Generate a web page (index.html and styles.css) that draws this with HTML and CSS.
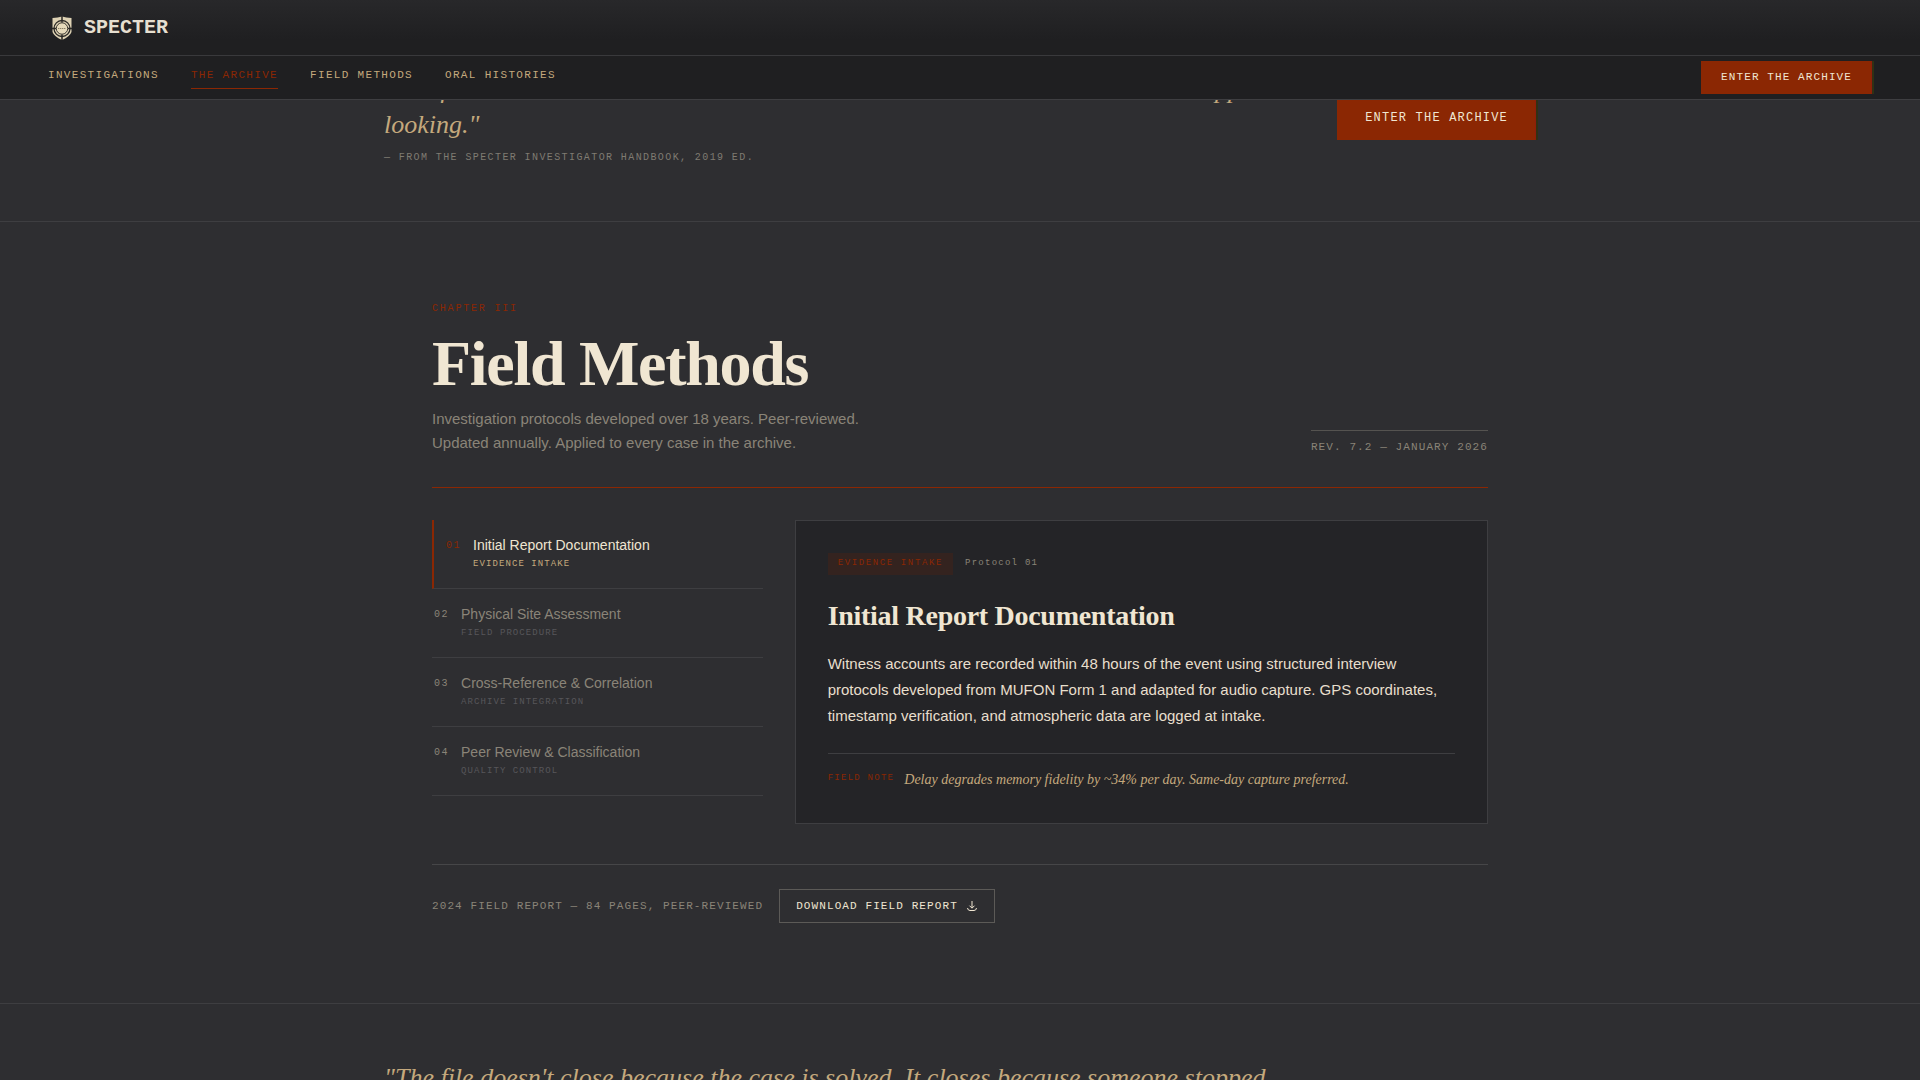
FILE: index.html
```html
<!DOCTYPE html>
<html lang="en">
  <head>
    <meta charset="UTF-8" />
    <meta name="viewport" content="width=device-width, initial-scale=1.0" />
    <title>Specter</title>
    <link rel="stylesheet" href="styles.css">
  </head>
  <body>
    <header class="site-header">
      <div class="brand-bar">
        <a href="#" class="brand">
          <svg class="brand-logo" viewBox="0 0 28 28" aria-hidden="true">
            <path d="M4.500 4 Q10 3.800 14 2.500 Q18 3.800 23.500 4 V18 Q22 22.500 14 26 Q6 22.500 4.500 18 Z" fill="#ded2b4" />
            <circle cx="14" cy="14.500" r="8" fill="none" stroke="#2b2926" stroke-width="1.300" />
            <circle cx="14" cy="14.500" r="5.700" fill="#e6dabb" stroke="#2b2926" stroke-width="0.900" />
            <path d="M14 2 V8.500 M14 20.500 V26 M4 14.500 H8 M20 14.500 H24" stroke="#2b2926" stroke-width="1.500" />
            <path d="M10 14.500 H18" fill="none" stroke="#8d8369" stroke-width="1.200" stroke-dasharray="1.400 0.600" />
          </svg>
          <span>SPECTER</span>
        </a>
      </div>
      <div class="nav-bar">
        <nav class="nav-links">
          <a href="#">INVESTIGATIONS</a>
          <a href="#" class="active">THE ARCHIVE</a>
          <a href="#methods">FIELD METHODS</a>
          <a href="#">ORAL HISTORIES</a>
        </nav>
        <a href="#" class="cta cta-small">ENTER THE ARCHIVE</a>
      </div>
    </header>

    <main>
      <section class="quote-section quote-first">
        <div class="quote-inner">
          <blockquote>
            <p>"The file doesn't close because the case is solved. It closes because someone stopped looking."</p>
            <cite>— FROM THE SPECTER INVESTIGATOR HANDBOOK, 2019 ED.</cite>
          </blockquote>
          <a href="#" class="cta cta-large">ENTER THE ARCHIVE</a>
        </div>
      </section>

      <section class="methods" id="methods">
        <div class="methods-head">
          <div>
            <p class="chapter">CHAPTER III</p>
            <h1>Field Methods</h1>
            <p class="intro">Investigation protocols developed over 18 years. Peer-reviewed.<br>Updated annually. Applied to every case in the archive.</p>
          </div>
          <p class="revision">REV. 7.2 — JANUARY 2026</p>
        </div>

        <div class="methods-grid">
          <div class="protocol-list">
            <button type="button" class="protocol active">
              <span class="num">01</span>
              <span class="label">Initial Report Documentation<small>EVIDENCE INTAKE</small></span>
            </button>
            <button type="button" class="protocol">
              <span class="num">02</span>
              <span class="label">Physical Site Assessment<small>FIELD PROCEDURE</small></span>
            </button>
            <button type="button" class="protocol">
              <span class="num">03</span>
              <span class="label">Cross-Reference &amp; Correlation<small>ARCHIVE INTEGRATION</small></span>
            </button>
            <button type="button" class="protocol">
              <span class="num">04</span>
              <span class="label">Peer Review &amp; Classification<small>QUALITY CONTROL</small></span>
            </button>
          </div>

          <article class="detail">
            <div class="detail-meta">
              <span class="tag">EVIDENCE INTAKE</span>
              <span class="protocol-id">Protocol 01</span>
            </div>
            <h2>Initial Report Documentation</h2>
            <p class="detail-text">Witness accounts are recorded within 48 hours of the event using structured interview protocols developed from MUFON Form 1 and adapted for audio capture. GPS coordinates, timestamp verification, and atmospheric data are logged at intake.</p>
            <div class="note">
              <span class="note-label">FIELD NOTE</span>
              <em>Delay degrades memory fidelity by ~34% per day. Same-day capture preferred.</em>
            </div>
          </article>
        </div>

        <div class="report">
          <span>2024 FIELD REPORT — 84 PAGES, PEER-REVIEWED</span>
          <button type="button" class="download">
            DOWNLOAD FIELD REPORT
            <svg viewBox="0 0 12 12" aria-hidden="true">
              <path d="M6 1 V8 M3.500 5.700 L6 8.200 L8.500 5.700 M1.500 8 Q1.800 10.500 4 10.500 H8 Q10.200 10.500 10.500 8" />
            </svg>
          </button>
        </div>
      </section>

      <section class="quote-section">
        <div class="quote-inner">
          <blockquote>
            <p>"The file doesn't close because the case is solved. It closes because someone stopped looking."</p>
            <cite>— FROM THE SPECTER INVESTIGATOR HANDBOOK, 2019 ED.</cite>
          </blockquote>
          <a href="#" class="cta cta-large">ENTER THE ARCHIVE</a>
        </div>
      </section>
    </main>
  </body>
</html>
```
FILE: styles.css
```css
:root {
  --bg: #2e2e31;
  --panel: #242427;
  --line: #3e3e41;
  --cream: #f0e6d2;
  --tan: #c4a97d;
  --muted: #8a8478;
  --dim: #57565a;
  --rust: #8b2703;
  --mono: "Liberation Mono", "Courier New", monospace;
  --serif: "Liberation Serif", "Times New Roman", serif;
  --sans: "Liberation Sans", Arial, sans-serif;
}
* {
  box-sizing: border-box;
}
body {
  margin: 0;
  background: var(--bg);
  color: var(--cream);
  font-family: var(--sans);
}
h1,
h2,
p,
blockquote {
  margin: 0;
}
a {
  text-decoration: none;
}
button {
  background: none;
  border: none;
  border-radius: 0;
  cursor: pointer;
}

/* Header */
.site-header {
  position: fixed;
  top: 0;
  left: 0;
  right: 0;
  z-index: 10;
  background: linear-gradient(#28282a, #1f1f21 40px);
  border-bottom: 1px solid var(--line);
}
.brand-bar {
  display: flex;
  align-items: center;
  height: 56px;
  padding: 0 48px;
  border-bottom: 1px solid #39393c;
}
.brand {
  display: flex;
  align-items: center;
  gap: 8px;
  color: #e6dfd0;
  font: bold 20px/24px var(--mono);
}
.brand-logo {
  width: 28px;
  height: 28px;
}
.nav-bar {
  display: flex;
  align-items: center;
  justify-content: space-between;
  height: 43px;
  padding: 0 48px;
}
.nav-links {
  display: flex;
  gap: 32px;
  margin-bottom: 4px;
}
.nav-links a {
  padding: 4px 0 5px;
  border-bottom: 1px solid transparent;
  color: var(--tan);
  font: 11px/16px var(--mono);
  letter-spacing: 0.12em;
}
.nav-links a.active {
  color: var(--rust);
  border-color: var(--rust);
}
.cta {
  background: var(--rust);
  box-shadow: 2px 0 0 #303114, inset -1px 0 0 #8f1d0a;
  color: var(--cream);
  font-family: var(--mono);
  letter-spacing: 0.1em;
  white-space: nowrap;
}
.cta-small {
  padding: 8px 20px;
  font-size: 11px;
  line-height: 17px;
}
.cta-large {
  padding: 14px 28px;
  font-size: 12px;
  line-height: 15px;
}

/* Quote */
.quote-section {
  padding: 56px 48px;
  border-bottom: 1px solid var(--line);
}
.quote-first {
  padding-top: 72px;
}
.quote-inner {
  display: flex;
  align-items: center;
  justify-content: space-between;
  gap: 48px;
  max-width: 1152px;
  margin: 0 auto;
}
.quote-inner p {
  color: var(--tan);
  font: italic 26px/35px var(--serif);
}
.quote-inner cite {
  display: block;
  margin-top: 8px;
  color: #7f7b72;
  font: normal 10px/15px var(--mono);
  letter-spacing: 0.14em;
}

/* Field methods */
.methods {
  border-bottom: 1px solid var(--line);
  padding: 80px max(48px, calc(50% - 528px));
}
.methods-head {
  display: flex;
  align-items: flex-end;
  justify-content: space-between;
  padding-bottom: 32px;
  border-bottom: 1px solid var(--rust);
}
.chapter {
  margin-bottom: 16px;
  color: var(--rust);
  font: 10px/14px var(--mono);
  letter-spacing: 0.18em;
}
h1 {
  font: bold 64px/64px var(--serif);
  letter-spacing: -0.02em;
}
.intro {
  margin-top: 11px;
  color: var(--muted);
  font-size: 15px;
  line-height: 24px;
}
.revision {
  padding-top: 8px;
  border-top: 1px solid #555350;
  color: var(--muted);
  font: 11px/16px var(--mono);
  letter-spacing: 0.1em;
}
.methods-grid {
  display: grid;
  grid-template-columns: repeat(12, 1fr);
  gap: 32px;
  margin-top: 32px;
}
.protocol-list {
  grid-column: span 4;
}
.protocol {
  display: flex;
  gap: 12px;
  width: 100%;
  padding: 16px 0 17px 2px;
  border-bottom: 1px solid var(--line);
  color: var(--muted);
  text-align: left;
}
.num {
  font: 10px/20px var(--mono);
  letter-spacing: 0.15em;
}
.label {
  font: 14px/18px var(--sans);
}
.label small {
  display: block;
  margin-top: 3px;
  color: var(--dim);
  font: 9px/14px var(--mono);
  letter-spacing: 0.12em;
}
.protocol.active {
  padding-left: 12px;
  border-left: 2px solid var(--rust);
  color: var(--cream);
}
.protocol.active .num {
  color: var(--rust);
}
.protocol.active small {
  color: var(--tan);
}
.detail {
  grid-column: span 8;
  padding: 32px;
  border: 1px solid var(--line);
  background: var(--panel);
}
.detail-meta {
  display: flex;
  align-items: baseline;
  gap: 12px;
  margin-bottom: 24px;
}
.tag {
  padding: 3px 10px 5px;
  background: #34231f;
  color: var(--rust);
  font: 9px/14px var(--mono);
  letter-spacing: 0.18em;
}
.protocol-id {
  color: var(--muted);
  font: 9px/14px var(--mono);
  letter-spacing: 0.14em;
}
h2 {
  margin-bottom: 18px;
  font: bold 28px/34px var(--serif);
  letter-spacing: -0.01em;
}
.detail-text {
  margin-bottom: 24px;
  color: #e8dfcd;
  font-size: 15px;
  line-height: 26px;
}
.note {
  display: flex;
  align-items: flex-start;
  gap: 10px;
  padding-top: 15px;
  border-top: 1px solid var(--line);
}
.note-label {
  color: var(--rust);
  font: 9px/18px var(--mono);
  letter-spacing: 0.14em;
}
.note em {
  color: var(--tan);
  font: italic 14px/22px var(--serif);
}
.report {
  display: flex;
  align-items: center;
  gap: 16px;
  margin-top: 40px;
  padding-top: 24px;
  border-top: 1px solid #464648;
  color: var(--muted);
  font: 11px/16px var(--mono);
  letter-spacing: 0.1em;
}
.download {
  display: flex;
  align-items: center;
  gap: 8px;
  padding: 8px 16px;
  border: 1px solid #5c5a57;
  color: var(--cream);
  font: inherit;
  letter-spacing: inherit;
}
.download svg {
  width: 12px;
  height: 12px;
  fill: none;
  stroke: currentColor;
}
```
